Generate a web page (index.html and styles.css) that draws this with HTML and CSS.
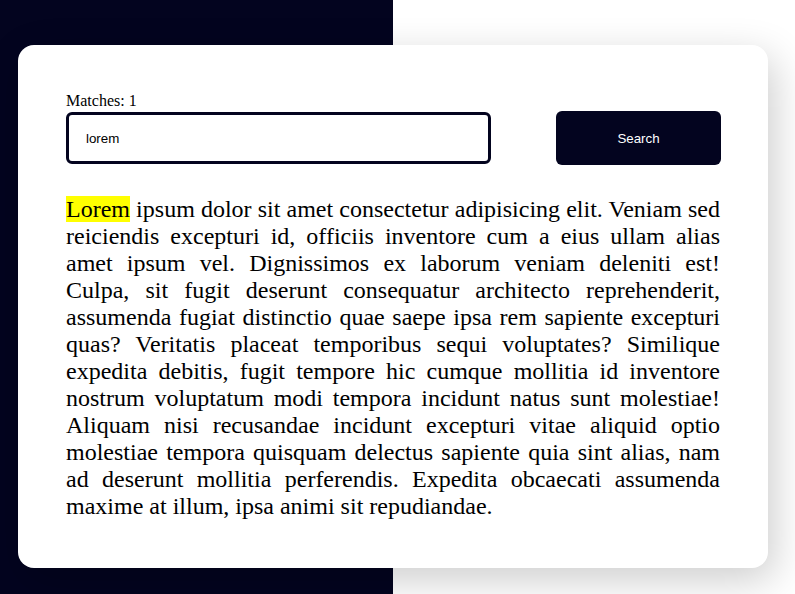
FILE: index.html
```html
<!DOCTYPE html>
<html>
<head>
<meta charset="utf-8">
<link rel="stylesheet" href="styles.css">
</head>
<body>
<div class="page">
  <div class="card">
    <div class="matches">Matches: 1</div>
    <div class="search-row">
      <input class="search-input" type="text" value="lorem">
      <button class="search-btn">Search</button>
    </div>
    <p class="text"><mark class="hl">Lorem</mark> ipsum dolor sit amet consectetur adipisicing elit. Veniam sed reiciendis excepturi id, officiis inventore cum a eius ullam alias amet ipsum vel. Dignissimos ex laborum veniam deleniti est! Culpa, sit fugit deserunt consequatur architecto reprehenderit, assumenda fugiat distinctio quae saepe ipsa rem sapiente excepturi quas? Veritatis placeat temporibus sequi voluptates? Similique expedita debitis, fugit tempore hic cumque mollitia id inventore nostrum voluptatum modi tempora incidunt natus sunt molestiae! Aliquam nisi recusandae incidunt excepturi vitae aliquid optio molestiae tempora quisquam delectus sapiente quia sint alias, nam ad deserunt mollitia perferendis. Expedita obcaecati assumenda maxime at illum, ipsa animi sit repudiandae.</p>
  </div>
</div>
</body>
</html>
```
FILE: styles.css
```css
html, body {
  margin: 0;
  padding: 0;
}
body {
  background: linear-gradient(to right, #03041f 0, #03041f 393px, #ffffff 393px);
  min-height: 594px;
  overflow: hidden;
  font-family: "Liberation Serif", "Times New Roman", serif;
}
.page {
  padding: 45px 0 0 18px;
}
.card {
  width: 750px;
  height: 523px;
  box-sizing: border-box;
  background: #ffffff;
  border-radius: 16px;
  padding: 47px 48px 0 48px;
  box-shadow: 6px 12px 40px rgba(0, 0, 0, 0.2);
}
.matches {
  font-size: 16px;
  line-height: 18px;
  color: #000;
}
.search-row {
  display: flex;
  align-items: center;
  justify-content: space-between;
  margin-top: 1px;
  margin-right: -1px;
}
.search-input {
  width: 425px;
  height: 52px;
  box-sizing: border-box;
  border: 3px solid #03041f;
  border-radius: 6px;
  padding: 0 17px;
  font-family: "Liberation Sans", Arial, sans-serif;
  font-size: 13.33px;
  color: #000;
  outline: none;
  background: #fff;
}
.search-btn {
  width: 165px;
  height: 54px;
  border: none;
  border-radius: 6px;
  background: #03041f;
  color: #ffffff;
  font-family: "Liberation Sans", Arial, sans-serif;
  font-size: 13.33px;
}
.text {
  margin: 31px 0 0 0;
  font-size: 24px;
  line-height: 27px;
  text-align: justify;
  color: #000;
}
.hl {
  background: #ffff00;
  color: #000;
}
```
